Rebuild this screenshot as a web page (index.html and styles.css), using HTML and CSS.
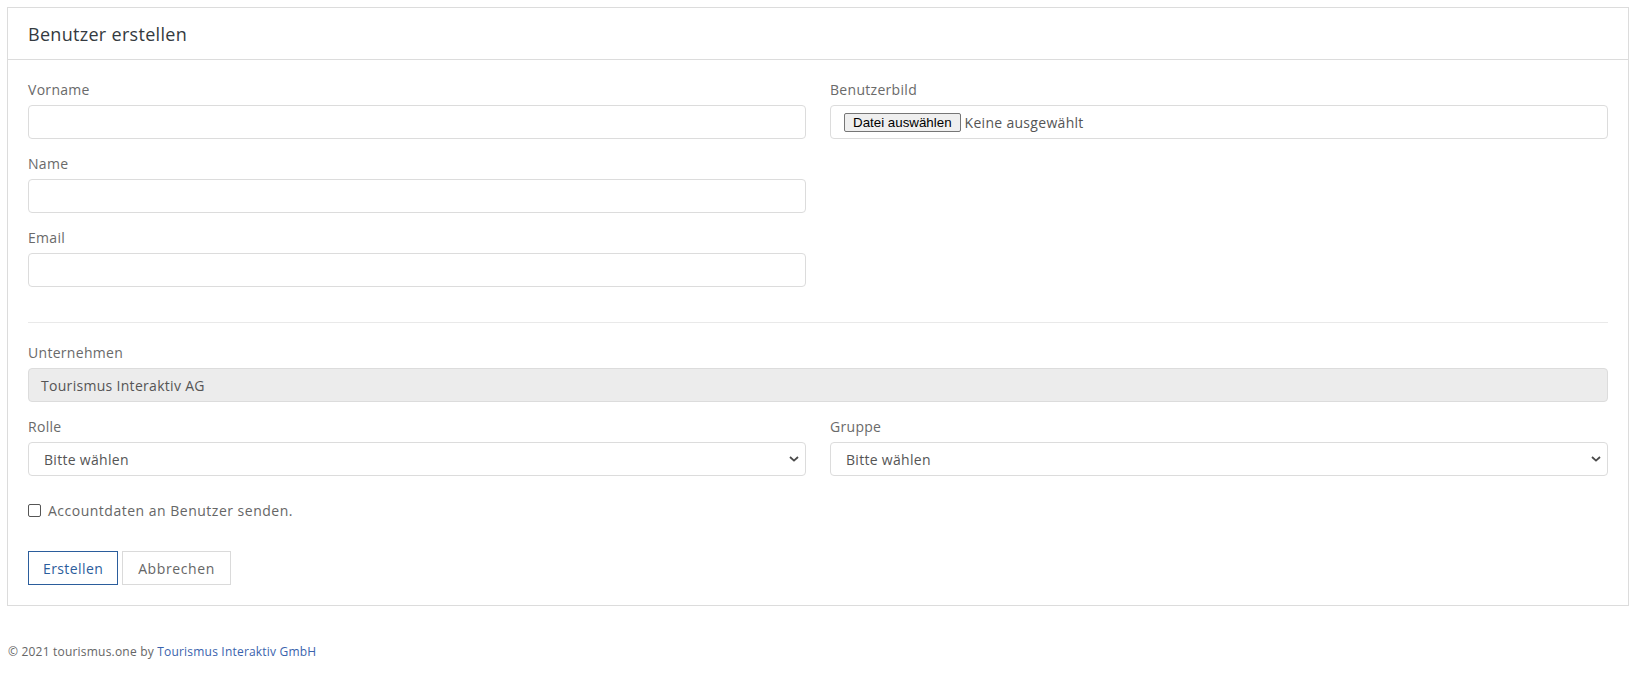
FILE: index.html
```html
<!DOCTYPE html>
<html lang="de">
<head>
<meta charset="utf-8">
<title>Benutzer erstellen</title>
<link rel="stylesheet" href="styles.css">
</head>
<body>
<div class="page">
  <div class="card">
    <div class="card-header"><h1 class="card-title">Benutzer erstellen</h1></div>
    <div class="card-body">
      <div class="row">
        <div class="col">
          <div class="group">
            <label class="label">Vorname</label>
            <input class="control" type="text">
          </div>
          <div class="group">
            <label class="label">Name</label>
            <input class="control" type="text">
          </div>
          <div class="group">
            <label class="label">Email</label>
            <input class="control" type="text">
          </div>
        </div>
        <div class="col">
          <div class="group">
            <label class="label">Benutzerbild</label>
            <div class="control file">
              <span class="file-btn">Datei auswählen</span>
              <span class="file-name">Keine ausgewählt</span>
            </div>
          </div>
        </div>
      </div>
      <hr class="sep">
      <div class="group">
        <label class="label">Unternehmen</label>
        <div class="control disabled">Tourismus Interaktiv AG</div>
      </div>
      <div class="row">
        <div class="col">
          <div class="group">
            <label class="label">Rolle</label>
            <div class="select-wrap">
              <select class="control select"><option>Bitte wählen</option></select>
              <svg class="chev" width="10" height="6" viewBox="0 0 10 6"><path d="M1 1l4 3.6L9 1" fill="none" stroke="#4a4a4a" stroke-width="1.8"/></svg>
            </div>
          </div>
        </div>
        <div class="col">
          <div class="group">
            <label class="label">Gruppe</label>
            <div class="select-wrap">
              <select class="control select"><option>Bitte wählen</option></select>
              <svg class="chev" width="10" height="6" viewBox="0 0 10 6"><path d="M1 1l4 3.6L9 1" fill="none" stroke="#4a4a4a" stroke-width="1.8"/></svg>
            </div>
          </div>
        </div>
      </div>
      <label class="check"><span class="box"></span><span>Accountdaten an Benutzer senden.</span></label>
      <div class="actions">
        <button class="btn btn-primary">Erstellen</button>
        <button class="btn btn-light">Abbrechen</button>
      </div>
    </div>
  </div>
  <footer class="footer">© 2021 tourismus.one by <a class="link" href="#">Tourismus Interaktiv GmbH</a></footer>
</div>
</body>
</html>
```

FILE: styles.css
```css
* { box-sizing: border-box; }
html, body { margin: 0; padding: 0; background: #fff; }
body {
  font-family: "Open Sans", "DejaVu Sans", sans-serif;
  color: #666;
  letter-spacing: 0.3px;
}
.page { padding: 7px 11px 0 7px; }
.card {
  border: 1px solid #dcdcdc;
  background: #fff;
}
.card-header {
  height: 52px;
  border-bottom: 1px solid #dcdcdc;
  display: flex;
  align-items: center;
  padding: 0 20px;
}
.card-title {
  margin: 0;
  font-size: 18px;
  font-weight: 400;
  color: #343a40;
  line-height: 1;
}
.card-body { padding: 19px 20px 20px; }
.row {
  display: grid;
  grid-template-columns: 1fr 1fr;
  column-gap: 24px;
}
.group { margin-bottom: 14px; }
.label {
  display: block;
  font-size: 14px;
  line-height: 21px;
  margin-bottom: 5px;
  color: #6a6a6a;
}
.control {
  display: block;
  width: 100%;
  height: 34px;
  border: 1px solid #dcdcdc;
  border-radius: 4px;
  background: #fff;
  padding: 0 12px;
  font-family: inherit;
  font-size: 14px;
  color: #555;
  letter-spacing: 0.3px;
  outline: none;
}
.disabled {
  background: #ececec;
  display: flex;
  align-items: center;
}
.file {
  display: flex;
  align-items: center;
  padding: 0 12px;
}
.file-btn {
  font-family: "Liberation Sans", Arial, sans-serif;
  font-size: 13.33px;
  letter-spacing: 0;
  color: #000;
  background: #efefef;
  border: 1px solid #767676;
  border-radius: 2px;
  height: 19px;
  line-height: 17px;
  padding: 0 8px;
  margin-left: 1px;
}
.file-name { margin-left: 4px; color: #555; }
.select-wrap { position: relative; }
.select {
  appearance: none;
  -webkit-appearance: none;
  padding-left: 15px;
}
.chev {
  position: absolute;
  right: 7px;
  top: 14px;
  pointer-events: none;
}
.sep {
  border: 0;
  border-top: 1px solid #e9e9e9;
  margin: 21px 0 19px;
}
.check {
  display: flex;
  align-items: center;
  font-size: 14px;
  line-height: 21px;
  margin-top: 10px;
  color: #666;
  letter-spacing: 0.5px;
}
.box {
  width: 13px;
  height: 13px;
  border: 1px solid #555;
  border-radius: 2px;
  margin-right: 7px;
  background: #fff;
}
.actions {
  display: flex;
  gap: 4px;
  margin-top: 30px;
}
.btn {
  height: 34px;
  padding: 0 14px;
  font-family: inherit;
  font-size: 14px;
  letter-spacing: 0.4px;
  background: #fff;
  border-radius: 0;
  cursor: pointer;
}
.btn-primary { border: 1px solid #2b5d9c; color: #2b5d9c; }
.btn-light { border: 1px solid #dadada; color: #666; padding: 0 15px; letter-spacing: 0.6px; }
.footer {
  margin-top: 37px;
  font-size: 12px;
  line-height: 18px;
  color: #666;
  padding-left: 1px;
  letter-spacing: 0.2px;
}
.link { color: #3a63ad; text-decoration: none; }
```
